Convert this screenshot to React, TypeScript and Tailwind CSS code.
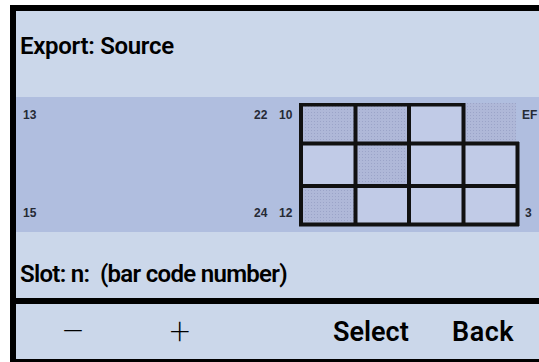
export default function App() {
  const font = { fontFamily: 'Roboto, "Liberation Sans", Arial, sans-serif' };

  return (
    <div className="w-[539px] h-[362px] bg-white overflow-hidden pt-[5px] pl-[10px]">
      <div
        className="w-[529px] h-[357px] flex flex-col bg-[#cbd7ea] border-l-[6px] border-t-[6px] border-b-[3px] border-black text-black"
        style={font}
      >
        {/* title */}
        <div className="h-[86px] pl-[4px] pt-[20px] text-[24px] font-semibold leading-[30px] tracking-[-0.3px]">
          Export: Source
        </div>

        {/* storage picture */}
        <div className="relative h-[135px] w-[523px] bg-[#b0bedf] overflow-hidden font-['Liberation_Sans',Arial,sans-serif] text-[12px] font-bold text-[#262a35]">
          <span className="absolute left-[7px] top-[9px]">13</span>
          <span className="absolute left-[238px] top-[9px]">22</span>
          <span className="absolute left-[263px] top-[9px]">10</span>
          <span className="absolute left-[7px] top-[107px]">15</span>
          <span className="absolute left-[238px] top-[107px]">24</span>
          <span className="absolute left-[263px] top-[107px]">12</span>
          <span className="absolute left-[506px] top-[9px]">EF</span>
          <span className="absolute left-[509px] top-[107px]">3</span>
          <svg className="absolute left-[283px] top-[6px]" width="222" height="125" viewBox="0 0 222 125">
            <defs>
              <pattern id="dots" width="3" height="3" patternUnits="userSpaceOnUse">
                <rect width="3" height="3" fill="#afb8d8" />
                <rect width="1" height="1" fill="#9ba4c8" />
              </pattern>
            </defs>
            {/* row 0 */}
            <rect x="4" y="3" width="52" height="37" fill="url(#dots)" />
            <rect x="57" y="3" width="53" height="37" fill="url(#dots)" />
            <rect x="110" y="3" width="55" height="37" fill="#c1cbe7" />
            <rect x="165" y="0" width="52" height="40" fill="url(#dots)" />
            {/* row 1 */}
            <rect x="4" y="41" width="52" height="42" fill="#c1cbe7" />
            <rect x="57" y="41" width="53" height="42" fill="url(#dots)" />
            <rect x="110" y="41" width="55" height="42" fill="#c1cbe7" />
            <rect x="165" y="41" width="53" height="42" fill="#c1cbe7" />
            {/* row 2 */}
            <rect x="4" y="83" width="52" height="38" fill="url(#dots)" />
            <rect x="57" y="83" width="53" height="38" fill="#c1cbe7" />
            <rect x="110" y="83" width="55" height="38" fill="#c1cbe7" />
            <rect x="165" y="83" width="53" height="38" fill="#c1cbe7" />
            <g stroke="#111" strokeWidth="4" fill="none">
              <line x1="0" y1="1.5" x2="166" y2="1.5" />
              <line x1="0" y1="40.5" x2="220" y2="40.5" />
              <line x1="0" y1="83" x2="220" y2="83" />
              <line x1="0" y1="121.5" x2="220" y2="121.5" />
              <line x1="2" y1="0" x2="2" y2="123" />
              <line x1="56.5" y1="0" x2="56.5" y2="123" />
              <line x1="110" y1="0" x2="110" y2="123" />
              <line x1="164.5" y1="0" x2="164.5" y2="123" />
              <line x1="218.5" y1="39" x2="218.5" y2="123" />
            </g>
          </svg>
        </div>

        {/* slot line */}
        <div className="h-[66px] pl-[4px] pt-[27px] text-[24px] font-semibold leading-[30px] tracking-[-0.7px] whitespace-pre">
          Slot: n:  (bar code number)
        </div>

        <div className="h-[6px] bg-black" />

        {/* soft keys */}
        <div className="flex-1 flex items-center text-[27px] leading-[30px]">
          <span className="w-[104px] text-center pl-[10px] font-light">—</span>
          <span className="w-[120px] text-center font-extralight text-[36px]">+</span>
          <span className="w-[93px]" />
          <span className="w-[119px] font-semibold">Select</span>
          <span className="font-semibold tracking-[0.5px]">Back</span>
        </div>
      </div>
    </div>
  );
}
